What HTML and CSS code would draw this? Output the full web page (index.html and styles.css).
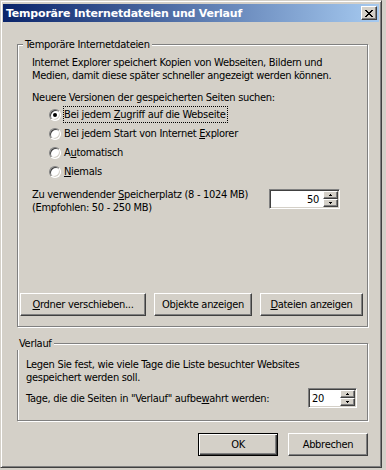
FILE: index.html
```html
<!DOCTYPE html>
<html lang="de">
<head>
    <meta charset="UTF-8">
    <title>Temporäre Internetdateien und Verlauf</title>
    <link rel="stylesheet" href="styles.css">
</head>
<body>
    <div class="window">
        <div class="titlebar">
            <span class="title">Temporäre Internetdateien und Verlauf</span>
            <span class="close">
                <svg width="8" height="7" viewBox="0 0 8 7"><path d="M0 0h2v1h-2z M6 0h2v1h-2z M1 1h2v1h-2z M5 1h2v1h-2z M2 2h4v1h-4z M3 3h2v1h-2z M2 4h4v1h-4z M1 5h2v1h-2z M5 5h2v1h-2z M0 6h2v1h-2z M6 6h2v1h-2z" fill="#000"/></svg>
            </span>
        </div>
        <div class="content">
            <fieldset class="group group-temp">
                <legend>Temporäre Internetdateien</legend>
                <p class="desc">Internet Explorer speichert Kopien von Webseiten, Bildern und<br>Medien, damit diese später schneller angezeigt werden können.</p>
                <p class="question">Neuere Versionen der gespeicherten Seiten suchen:</p>
                <div class="radios">
                    <div class="radio-row"><span class="radio checked"></span><span class="radio-label focused">Bei jedem <u>Z</u>ugriff auf die Webseite</span></div>
                    <div class="radio-row"><span class="radio"></span><span class="radio-label">Bei jedem Start von Internet <u>E</u>xplorer</span></div>
                    <div class="radio-row"><span class="radio"></span><span class="radio-label">A<u>u</u>tomatisch</span></div>
                    <div class="radio-row"><span class="radio"></span><span class="radio-label"><u>N</u>iemals</span></div>
                </div>
                <div class="space-row">
                    <p>Zu verwendender <u>S</u>peicherplatz (8 - 1024 MB)<br>(Empfohlen: 50 - 250 MB)</p>
                    <div class="spin spin-space">
                        <span class="spin-value">50</span>
                        <span class="spin-btns">
                            <span class="spin-btn"><svg width="3" height="2" viewBox="0 0 3 2"><path d="M1 0h1v1h1v1h-3v-1h1z" fill="#000"/></svg></span>
                            <span class="spin-btn"><svg width="3" height="2" viewBox="0 0 3 2"><path d="M0 0h3v1h-1v1h-1v-1h-1z" fill="#000"/></svg></span>
                        </span>
                    </div>
                </div>
                <div class="group-buttons">
                    <span class="btn btn-move"><u>O</u>rdner verschieben...</span>
                    <span class="btn btn-objects">Ob<u>j</u>ekte anzeigen</span>
                    <span class="btn btn-files"><u>D</u>ateien anzeigen</span>
                </div>
            </fieldset>
            <fieldset class="group group-history">
                <legend>Verlauf</legend>
                <p class="desc">Legen Sie fest, wie viele Tage die Liste besuchter Websites<br>gespeichert werden soll.</p>
                <div class="days-row">
                    <span>Tage, die die Seiten in "Verlauf" aufbe<u>w</u>ahrt werden:</span>
                    <div class="spin spin-days">
                        <span class="spin-value">20</span>
                        <span class="spin-btns">
                            <span class="spin-btn"><svg width="3" height="2" viewBox="0 0 3 2"><path d="M1 0h1v1h1v1h-3v-1h1z" fill="#000"/></svg></span>
                            <span class="spin-btn"><svg width="3" height="2" viewBox="0 0 3 2"><path d="M0 0h3v1h-1v1h-1v-1h-1z" fill="#000"/></svg></span>
                        </span>
                    </div>
                </div>
            </fieldset>
            <div class="footer">
                <span class="btn btn-default">OK</span>
                <span class="btn">Abbrechen</span>
            </div>
        </div>
    </div>
</body>
</html>
```

FILE: styles.css
```css
body {
    margin: 0;
    background: #d4d0c8;
    font-family: "DejaVu Sans Condensed", "Liberation Sans", sans-serif;
    font-size: 11px;
    line-height: 13px;
    letter-spacing: -0.3px;
    color: #000;
}
p {
    margin: 0;
}
.window {
    width: 382px;
    height: 468px;
    box-sizing: border-box;
    border: 1px solid;
    border-color: #d4d0c8 #404040 #404040 #d4d0c8;
    box-shadow: inset 1px 1px #fff, inset -1px -1px #808080;
    padding: 3px 2px 2px 2px;
    background: #d4d0c8;
    display: flex;
    flex-direction: column;
}
.titlebar {
    height: 18px;
    display: flex;
    align-items: center;
    justify-content: space-between;
    padding: 0 2px 0 3px;
    background: linear-gradient(to right, #0a246a, #a6caf0);
}
.title {
    color: #fff;
    font-family: "DejaVu Sans", "Liberation Sans", sans-serif;
    font-weight: bold;
    letter-spacing: -0.2px;
}
.close {
    width: 16px;
    height: 14px;
    box-sizing: border-box;
    display: flex;
    align-items: center;
    justify-content: center;
    background: #d4d0c8;
    border: 1px solid;
    border-color: #fff #404040 #404040 #fff;
    box-shadow: inset -1px -1px #808080;
}
.content {
    display: flex;
    flex-direction: column;
    padding-left: 14px;
}
.group {
    width: 351px;
    box-sizing: border-box;
    margin: 0;
    min-width: 0;
    border: 1px solid #808080;
    box-shadow: inset 1px 1px #fff, 1px 1px #fff;
}
.group legend {
    margin-left: -9px;
    padding: 0 2px;
    background: #d4d0c8;
}
.group-temp {
    margin-top: 16px;
    padding: 5px 14px 10px 14px;
}
.question {
    margin-top: 9px;
}
.radios {
    margin: 1px 0 0 17px;
}
.radio-row {
    height: 19px;
    display: flex;
    align-items: center;
}
.radio {
    width: 12px;
    height: 12px;
    box-sizing: border-box;
    margin-right: 2px;
    border-radius: 50%;
    border: 1px solid;
    border-color: #808080 #fff #fff #808080;
    box-shadow: inset 1px 1px #404040, inset -1px -1px #d4d0c8;
    background: #fff;
    display: flex;
    align-items: center;
    justify-content: center;
}
.radio.checked::after {
    content: "";
    width: 4px;
    height: 4px;
    border-radius: 50%;
    background: #000;
}
.radio-label {
    padding: 1px 1px 1px 0;
    border: 1px dotted transparent;
}
.radio-label.focused {
    border-color: #000;
}
.space-row {
    display: flex;
    margin-top: 7px;
}
.spin {
    height: 20px;
    box-sizing: border-box;
    display: flex;
    align-items: stretch;
    background: #fff;
    border: 1px solid;
    border-color: #808080 #fff #fff #808080;
    box-shadow: inset 1px 1px #404040, inset -1px -1px #d4d0c8;
    padding: 1px;
}
.spin-value {
    flex: 1;
    display: flex;
    align-items: center;
}
.spin-space {
    width: 71px;
    margin: 1px 13px 0 auto;
}
.spin-space .spin-value {
    justify-content: flex-end;
    padding-right: 4px;
}
.spin-days {
    width: 49px;
    margin-left: auto;
}
.spin-days .spin-value {
    padding-left: 2px;
}
.spin-btns {
    width: 15px;
    display: flex;
    flex-direction: column;
}
.spin-btn {
    flex: 1;
    box-sizing: border-box;
    display: flex;
    align-items: center;
    justify-content: center;
    background: #d4d0c8;
    border: 1px solid;
    border-color: #fff #404040 #404040 #fff;
    box-shadow: inset -1px -1px #808080;
}
.group-buttons {
    display: flex;
    gap: 8px;
    margin: 79px -10px 0 -12px;
}
.btn {
    height: 23px;
    box-sizing: border-box;
    display: flex;
    align-items: center;
    justify-content: center;
    background: #d4d0c8;
    border: 1px solid;
    border-color: #fff #404040 #404040 #fff;
    box-shadow: inset -1px -1px #808080;
}
.btn-move {
    width: 126px;
}
.btn-objects {
    width: 98px;
}
.btn-files {
    width: 103px;
}
.group-history {
    margin-top: 10px;
    padding: 8px 10px 12px 8px;
}
.days-row {
    display: flex;
    align-items: center;
    margin-top: 4px;
}
.footer {
    display: flex;
    justify-content: flex-end;
    gap: 10px;
    width: 351px;
    margin-top: 12px;
}
.footer .btn {
    width: 80px;
}
.btn-default {
    border-color: #000;
    box-shadow: inset 1px 1px #fff, inset -1px -1px #404040, inset -2px -2px #808080;
}
```
